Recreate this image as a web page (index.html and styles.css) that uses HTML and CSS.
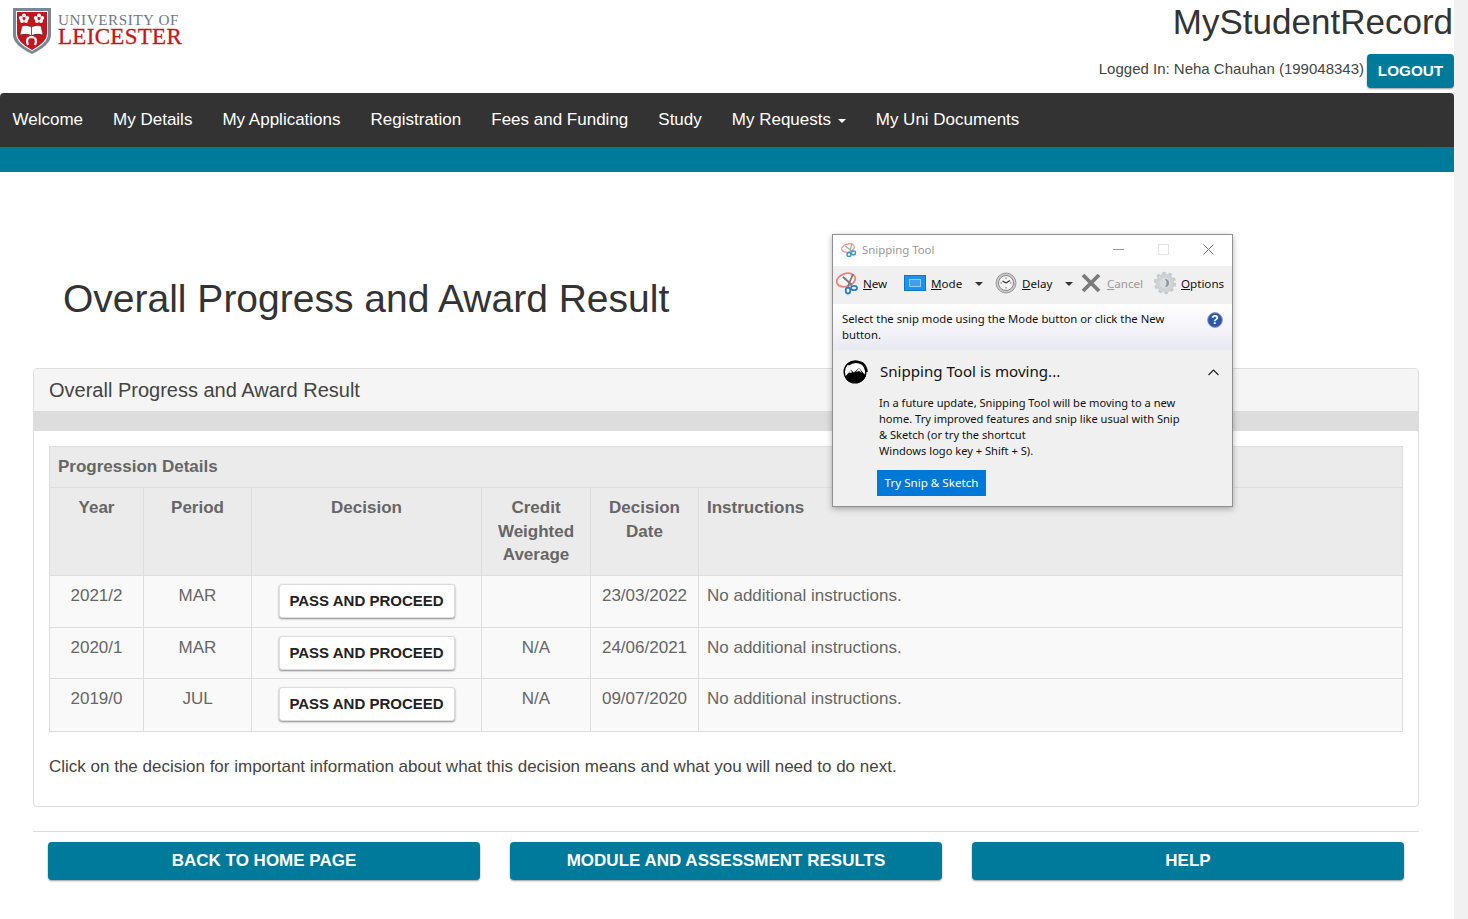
FILE: index.html
```html
<!DOCTYPE html>
<html lang="en">
<head>
<meta charset="utf-8">
<title>MyStudentRecord</title>
<link rel="stylesheet" href="styles.css">
</head>
<body>
<div class="page">
  <header class="top">
    <div class="logo">
      <svg class="crest" width="38" height="46" viewBox="0 0 38 46">
        <path d="M0 0H38V27Q38 37 19 46Q0 37 0 27Z" fill="#7b8791"/>
        <path d="M3 3H35V26Q35 35 19 43Q3 35 3 26Z" fill="#fff"/>
        <path d="M4 4H34V26Q34 34 19 42Q4 34 4 26Z" fill="#c4161c"/>
        <g fill="#fff">
          <circle cx="11" cy="7.5" r="2"/><circle cx="7.8" cy="10" r="2"/><circle cx="14.2" cy="10" r="2"/><circle cx="9" cy="13" r="2"/><circle cx="13" cy="13" r="2"/>
          <circle cx="26" cy="7.5" r="2"/><circle cx="22.8" cy="10" r="2"/><circle cx="29.2" cy="10" r="2"/><circle cx="24" cy="13" r="2"/><circle cx="28" cy="13" r="2"/>
        </g>
        <circle cx="11" cy="10.5" r="1.2" fill="#c4161c"/><circle cx="26" cy="10.5" r="1.2" fill="#c4161c"/>
        <path d="M7 27L9 18Q14 16.500 18.500 19Q23 16.500 28 18L30 27Q24 25 18.500 27.500Q13 25 7 27Z" fill="#fff" stroke="#222" stroke-width=".5"/>
        <path d="M18.500 19V27" stroke="#222" stroke-width=".7"/>
        <path d="M15 37Q12 29.500 18.500 29Q25 29.500 22 37" fill="none" stroke="#fff" stroke-width="2.2"/>
      </svg>
      <div class="wordmark">
        <span class="uni">UNIVERSITY OF</span>
        <span class="lei">LEICESTER</span>
      </div>
    </div>
    <div class="account">
      <div class="app-title">MyStudentRecord</div>
      <div class="login-row">
        <span class="login-text">Logged In: Neha Chauhan (199048343)</span>
        <a class="btn-teal btn-logout">LOGOUT</a>
      </div>
    </div>
  </header>

  <nav class="nav">
    <a>Welcome</a>
    <a>My Details</a>
    <a>My Applications</a>
    <a>Registration</a>
    <a>Fees and Funding</a>
    <a>Study</a>
    <a>My Requests <i class="caret"></i></a>
    <a>My Uni Documents</a>
  </nav>
  <div class="teal-bar"></div>

  <h1 class="title">Overall Progress and Award Result</h1>

  <section class="panel">
    <div class="panel-head">Overall Progress and Award Result</div>
    <div class="panel-strip"></div>
    <div class="panel-body">
      <table class="grid">
        <colgroup>
          <col class="c-year"><col class="c-period"><col class="c-decision"><col class="c-credit"><col class="c-date"><col>
        </colgroup>
        <thead>
          <tr class="caption-row"><th colspan="6">Progression Details</th></tr>
          <tr class="head-row">
            <th>Year</th><th>Period</th><th>Decision</th><th>Credit Weighted Average</th><th>Decision Date</th><th class="left">Instructions</th>
          </tr>
        </thead>
        <tbody>
          <tr class="r1"><td>2021/2</td><td>MAR</td><td><a class="btn-white">PASS AND PROCEED</a></td><td></td><td>23/03/2022</td><td class="left">No additional instructions.</td></tr>
          <tr class="r2"><td>2020/1</td><td>MAR</td><td><a class="btn-white">PASS AND PROCEED</a></td><td>N/A</td><td>24/06/2021</td><td class="left">No additional instructions.</td></tr>
          <tr class="r3"><td>2019/0</td><td>JUL</td><td><a class="btn-white">PASS AND PROCEED</a></td><td>N/A</td><td>09/07/2020</td><td class="left">No additional instructions.</td></tr>
        </tbody>
      </table>
      <p class="note">Click on the decision for important information about what this decision means and what you will need to do next.</p>
    </div>
  </section>

  <hr class="rule">
  <div class="actions">
    <a class="btn-teal btn-action">BACK TO HOME PAGE</a>
    <a class="btn-teal btn-action">MODULE AND ASSESSMENT RESULTS</a>
    <a class="btn-teal btn-action">HELP</a>
  </div>
</div>
<div class="scrollbar"></div>

<aside class="snip">
  <div class="snip-title">
    <svg width="18" height="16" viewBox="0 0 18 16"><ellipse cx="7" cy="6" rx="6.500" ry="4" fill="#fff" stroke="#ee9a9a" stroke-width="1.300" transform="rotate(-15 7 6)"/><path d="M11 1L9 9M4 4L11 9" stroke="#aaa" stroke-width="1.200"/><circle cx="8" cy="12.500" r="2" fill="none" stroke="#39c" stroke-width="1.400"/><circle cx="12.500" cy="11" r="2" fill="none" stroke="#39c" stroke-width="1.400"/></svg>
    <span class="snip-name">Snipping Tool</span>
    <span class="win-controls">
      <svg width="11" height="11" viewBox="0 0 11 11"><path d="M0 5.500H11" stroke="#9a9a9a"/></svg>
      <svg width="11" height="11" viewBox="0 0 11 11"><rect x=".5" y=".5" width="10" height="10" fill="none" stroke="#e4e4e4"/></svg>
      <svg width="11" height="11" viewBox="0 0 11 11"><path d="M.5 .5L10.500 10.500M10.500 .5L.5 10.500" stroke="#777"/></svg>
    </span>
  </div>
  <div class="snip-tools">
    <span class="tool t-new">
      <svg width="24" height="24" viewBox="0 0 24 24"><ellipse cx="10" cy="9" rx="9.500" ry="6.500" fill="#f7f4f4" stroke="#ee8080" stroke-width="1.800" transform="rotate(-18 10 9)"/><path d="M17 3L12 15M7 6L16 14" stroke="#777" stroke-width="1.800"/><ellipse cx="12" cy="19.500" rx="2.300" ry="3" fill="none" stroke="#2a7fc4" stroke-width="1.800"/><ellipse cx="18" cy="17" rx="3" ry="2.200" fill="none" stroke="#2a7fc4" stroke-width="1.800"/></svg>
      <span><u>N</u>ew</span>
    </span>
    <span class="tool t-mode">
      <svg width="22" height="16" viewBox="0 0 22 16"><rect x=".5" y=".5" width="21" height="15" fill="#1e90ee" stroke="#0b76cc"/><rect x="5.500" y="4.500" width="11" height="7" fill="#3f9fee" stroke="#fff" stroke-dasharray="1 1"/></svg>
      <span><u>M</u>ode</span>
    </span>
    <i class="tool-caret c-mode"></i>
    <span class="tool t-delay">
      <svg width="22" height="22" viewBox="0 0 22 22"><circle cx="11" cy="11" r="10" fill="#c9c9c9" stroke="#9a9a9a"/><circle cx="11" cy="11" r="7.500" fill="#f4f4f4" stroke="#8a8a8a"/><path d="M11 5.500V7M11 15V16.500M5.500 11H7M15 11H16.500" stroke="#777"/><path d="M11 11L15 8.500M11 11L7.500 9" stroke="#333" stroke-width="1.300" fill="none"/></svg>
      <span><u>D</u>elay</span>
    </span>
    <i class="tool-caret c-delay"></i>
    <span class="tool t-cancel">
      <svg width="20" height="20" viewBox="0 0 20 20"><path d="M2 2L18 18M18 2L2 18" stroke="#7a7a7a" stroke-width="3.800"/></svg>
      <span class="disabled"><u>C</u>ancel</span>
    </span>
    <span class="tool t-options">
      <svg width="22" height="24" viewBox="0 0 22 24"><circle cx="11" cy="12" r="7.500" fill="#d8dde0" stroke="#cdd2d6" stroke-width="4"/><circle cx="11" cy="12" r="10" fill="none" stroke="#c6cbcf" stroke-width="2.400" stroke-dasharray="3.500 2.800"/><path d="M11 8A4 4 0 0 1 11 16A6 6 0 0 0 11 8Z" fill="#8f959a"/></svg>
      <span><u>O</u>ptions</span>
    </span>
  </div>
  <div class="snip-hint">
    <p>Select the snip mode using the Mode button or click the New button.</p>
    <svg class="help" width="16" height="16" viewBox="0 0 16 16"><circle cx="8" cy="8" r="7.400" fill="#2f55a8" stroke="#8fa0c0"/><text x="8" y="12" text-anchor="middle" class="help-q">?</text></svg>
  </div>
  <div class="snip-notice">
    <div class="notice-head">
      <svg width="26" height="24" viewBox="0 0 26 24"><circle cx="13" cy="12" r="10.800" fill="#fff" stroke="#000" stroke-width="1.400"/><path d="M6 4.500Q13 -0.500 20.500 3.500Q24 6 24.500 12" fill="none" stroke="#000" stroke-width="2.600"/><path d="M3 17L9 10L12 12.500L17 8L24 16Q21 23 13 23Q6 23 3 17Z" fill="#000"/><path d="M9 10L7 13L10 12.500ZM17 8L14 12L17 11L20 13Z" fill="#fff"/></svg>
      <span class="notice-title">Snipping Tool is moving...</span>
      <svg class="chev" width="11" height="7" viewBox="0 0 11 7"><path d="M.5 6L5.500 1L10.500 6" fill="none" stroke="#222" stroke-width="1.200"/></svg>
    </div>
    <p class="notice-text">In a future update, Snipping Tool will be moving to a new<br>home. Try improved features and snip like usual with Snip<br>&amp; Sketch (or try the shortcut<br>Windows logo key + Shift + S).</p>
    <a class="notice-btn">Try Snip &amp; Sketch</a>
  </div>
</aside>
</body>
</html>
```
FILE: styles.css
```css
* { box-sizing: border-box; }
html, body { margin: 0; padding: 0; height: 100%; overflow: hidden; }
body {
  background: #fff;
  color: #333;
  font-family: "Liberation Sans", Arial, sans-serif;
  display: flex;
  position: relative;
}
.page { width: 1454px; flex: none; }
.scrollbar { flex: 1; background: #f1f1f1; }

.top { height: 93px; display: flex; justify-content: space-between; }
.logo { display: flex; padding: 8px 0 0 13px; gap: 7px; align-items: flex-start; }
.crest { flex: none; }
.wordmark { display: flex; flex-direction: column; font-family: "Liberation Serif", serif; padding-top: 4px; }
.uni { font-size: 15.2px; line-height: 15px; color: #6d7a84; letter-spacing: .55px; }
.lei { font-size: 23px; line-height: 20px; color: #c4161c; letter-spacing: .3px; -webkit-text-stroke: .3px #c4161c; }

.account { display: flex; flex-direction: column; align-items: flex-end; }
.app-title { font-size: 35px; line-height: 40px; margin: 2px 1px 0 0; }
.login-row { display: flex; align-items: flex-start; gap: 3px; margin-top: 12px; }
.login-text { font-size: 15px; line-height: 30px; color: #444; }

.btn-teal {
  background: #007a9b;
  color: #fff;
  font-weight: 700;
  border-radius: 4px;
  box-shadow: 0 1px 2px rgba(0,0,0,.4);
  display: block;
  text-align: center;
}
.btn-logout { width: 87px; height: 34px; font-size: 15.3px; line-height: 33px; }

.nav {
  height: 54px;
  background: #333;
  border-radius: 4px 4px 0 0;
  display: flex;
  padding-left: 12.5px;
  gap: 30px;
  align-items: center;
}
.nav a { color: #fff; font-size: 17px; white-space: nowrap; }
.caret {
  display: inline-block;
  width: 0; height: 0;
  margin-left: 2px;
  vertical-align: 2px;
  border-left: 4px solid transparent;
  border-right: 4px solid transparent;
  border-top: 4px solid #fff;
}
.teal-bar { height: 25px; background: #007a9b; }

.title {
  font-size: 39px;
  font-weight: 400;
  line-height: 44px;
  margin: 105px 0 47px 63px;
  color: #333;
}

.panel {
  margin: 0 35px 0 33px;
  height: 439px;
  border: 1px solid #ddd;
  border-radius: 4px;
}
.panel-head {
  height: 42px;
  background: #f5f5f5;
  font-size: 20px;
  line-height: 42px;
  padding-left: 15px;
  color: #444;
  border-radius: 3px 3px 0 0;
}
.panel-strip { height: 20px; background: #ddd; }
.panel-body { padding: 15px 15px 0; }

.grid { width: 1354px; border-collapse: collapse; table-layout: fixed; color: #666; font-size: 17px; }
.c-year { width: 94px; }
.c-period { width: 108px; }
.c-decision { width: 230px; }
.c-credit { width: 109px; }
.c-date { width: 108px; }
.grid th, .grid td { border: 1px solid #ddd; text-align: center; vertical-align: top; padding: 8px; line-height: 24px; }
.grid th { background: #ebebeb; font-weight: 700; }
.grid td { background: #f9f9f9; }
.grid .left { text-align: left; }
.grid .caption-row th { text-align: left; height: 41px; }
.grid .head-row th { height: 88px; padding-bottom: 7px; line-height: 23.5px; }
.r1 td { height: 52px; }
.r2 td { height: 51px; }
.r3 td { height: 53px; }

.btn-white {
  display: inline-block;
  width: 176px;
  height: 34px;
  background: #fff;
  border-radius: 3px;
  border: 1px solid #ddd;
  box-shadow: 0 1px 2px rgba(0,0,0,.45);
  color: #222;
  font-size: 15px;
  font-weight: 700;
  line-height: 31px;
  white-space: nowrap;
}

.note { margin: 23px 0 0; font-size: 17px; line-height: 24px; color: #444; }

.rule { margin: 24px 35px 0 33px; border: 0; border-top: 1px solid #ddd; height: 1px; }
.actions { display: flex; gap: 30px; padding: 10px 0 0 48px; }
.btn-action { width: 432px; height: 38px; font-size: 17px; line-height: 37px; }

.snip {
  position: absolute;
  left: 832px;
  top: 234px;
  width: 401px;
  height: 273px;
  background: #f0f0f0;
  border: 1px solid #8f8f8f;
  box-shadow: 0 2px 6px rgba(0,0,0,.3);
  font-family: "Noto Sans", "Open Sans", sans-serif;
  font-size: 11.6px;
  color: #111;
  display: flex;
  flex-direction: column;
}
.snip-title { height: 31px; background: #fff; display: flex; align-items: center; padding: 0 0 2px 8px; gap: 3px; }
.snip-name { color: #999; font-size: 11.4px; }
.win-controls { margin-left: auto; display: flex; gap: 34px; padding-right: 18px; }
.snip-tools { height: 38px; display: flex; align-items: center; position: relative; }
.tool { display: flex; align-items: center; gap: 3px; position: absolute; top: 5px; height: 24px; }
.t-new { left: 3px; }
.t-mode { left: 71px; gap: 5px; }
.t-delay { left: 162px; gap: 5px; }
.t-cancel { left: 248px; gap: 6px; }
.t-options { left: 321px; gap: 5px; }
.disabled { color: #999; }
.tool-caret { position: absolute; top: 16px; width: 0; height: 0; border-left: 4px solid transparent; border-right: 4px solid transparent; border-top: 4px solid #333; }
.c-mode { left: 142px; }
.c-delay { left: 232px; }
.snip-hint {
  height: 46px;
  background: linear-gradient(#fff, #e9e9f3);
  padding: 7px 8px 0 9px;
  display: flex;
  justify-content: space-between;
  line-height: 16px;
}
.snip-hint p { margin: 0; width: 335px; font-size: 11.3px; }
.help { margin: 1px 1px 0 0; }
.help-q { font: 700 12px "Liberation Sans", sans-serif; fill: #fff; }
.snip-notice { flex: 1; padding: 10px 0 0 44px; position: relative; }
.notice-head { height: 22px; display: flex; align-items: center; }
.notice-head svg:first-child { position: absolute; left: 9px; top: 10px; }
.notice-title { font-size: 15.1px; margin-left: 3px; }
.chev { position: absolute; left: 375px; top: 19px; }
.notice-text { margin: 13px 0 0 2px; font-size: 11.1px; line-height: 16px; white-space: nowrap; }
.notice-btn {
  display: block;
  width: 109px;
  height: 26px;
  margin-top: 11px;
  background: #0078d7;
  color: #fff;
  font-size: 11.6px;
  line-height: 25px;
  text-align: center;
}
```
